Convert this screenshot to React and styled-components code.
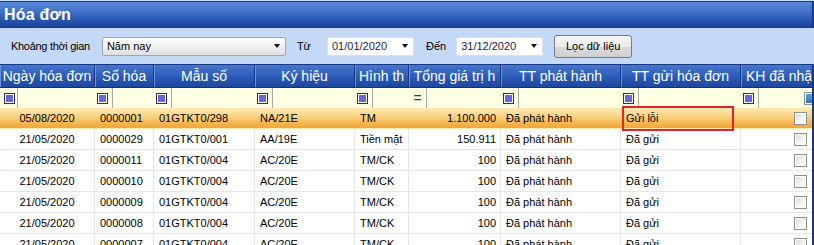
import React from "react";
import styled, { createGlobalStyle } from "styled-components";

const GlobalStyle = createGlobalStyle`
  html, body { margin: 0; padding: 0; background: #c4d9f6; }
  body { font-family: "Liberation Sans", Arial, sans-serif; font-size: 11px; color: #000; }
  * { box-sizing: border-box; }
`;

const COLS = "95px 59px 101px 100px 54px 92px 120px 120px 120px";

const Panel = styled.div`
  width: 814px;
  height: 245px;
  overflow: hidden;
  background: #c4d9f6;
`;

const TitleBar = styled.div`
  margin-top: 1px;
  height: 27px;
  border-top: 1px solid #17378a;
  border-bottom: 1px solid #173a8c;
  border-right: 2px solid #17378a;
  background: linear-gradient(#5a8ad8, #3d6cc6 45%, #2553ad 75%, #1d449c);
  display: flex;
  align-items: center;
  padding-left: 4px;
`;

const Title = styled.h1`
  margin: 0;
  font-size: 16px;
  font-weight: bold;
  color: #fff;
  letter-spacing: 0.2px;
`;

const Toolbar = styled.div`
  height: 36px;
  display: flex;
  align-items: center;
  padding-left: 11px;
`;

const Label = styled.span`
  margin-left: ${(p) => p.$ml || 0}px;
  white-space: nowrap;
  font-size: 11px;
  letter-spacing: ${(p) => p.$ls || 0}px;
`;

const Select = styled.div`
  margin-left: ${(p) => p.$ml || 0}px;
  width: ${(p) => p.$w}px;
  height: 19px;
  display: flex;
  align-items: center;
  justify-content: space-between;
  padding: 0 5px 0 4px;
  border: 1px solid ${(p) => (p.$combo ? "#9aa6b6" : "#d8e2ef")};
  border-radius: ${(p) => (p.$combo ? 2 : 0)}px;
  background: ${(p) =>
    p.$combo ? "linear-gradient(#ffffff, #f1f1f1 50%, #dedede)" : "#ffffff"};
  color: ${(p) => (p.$combo ? "#000" : "#1a1a4a")};
  font-size: 11px;
`;

const Arrow = styled.span`
  width: 0;
  height: 0;
  border-left: 3.5px solid transparent;
  border-right: 3.5px solid transparent;
  border-top: 4px solid #111;
`;

const Button = styled.button`
  margin-left: 11px;
  width: 78px;
  height: 23px;
  border: 1px solid #7a7a7a;
  border-radius: 3px;
  background: linear-gradient(#f6f6f6, #ebebeb 50%, #dadada 51%, #d0d0d0);
  font-family: "Liberation Sans", Arial, sans-serif;
  font-size: 11px;
  color: #000;
  padding: 0;
`;

const Grid = styled.div`
  position: relative;
  width: 814px;
  border-right: 2px solid #17378a;
  overflow: hidden;
  background: #fff;
`;

const Row = styled.div`
  display: grid;
  grid-template-columns: ${COLS};
  height: ${(p) => p.$h}px;
  width: 960px;
`;

const HeaderRow = styled(Row)`
  border-top: 1px solid #1a3a86;
  border-bottom: 1px solid #12337c;
  background: linear-gradient(#4675cb, #3263bf 40%, #2553ad 70%, #1f489f);
`;

const HeaderCell = styled.div`
  display: flex;
  align-items: center;
  justify-content: ${(p) => (p.$left ? "flex-start" : "center")};
  padding-left: ${(p) => (p.$left ? 5 : 0)}px;
  color: #fff;
  font-size: 14px;
  white-space: nowrap;
  overflow: hidden;
  border-right: 1px solid #18387e;
  box-shadow: inset 1px 0 0 #6a92dc;
`;

const FilterRow = styled(Row)`
  background: #fefee3;
`;

const FilterCell = styled.div`
  display: flex;
  align-items: center;
`;

const OpBox = styled.div`
  width: 18px;
  height: 20px;
  flex: none;
  display: flex;
  align-items: center;
  padding-left: ${(p) => p.$pl ?? 2}px;
  justify-content: ${(p) => (p.$center ? "center" : "flex-start")};
  border-right: 1px solid #a9a9a9;
  color: #333a66;
  font-size: 14px;
`;

const FilterIcon = styled.span`
  width: 11px;
  height: 11px;
  border: 1px solid #2c2c62;
  padding: 1px;
  background: #fff;
  display: block;
  &::after {
    content: "";
    display: block;
    width: 100%;
    height: 100%;
    background: #6767da;
  }
`;

const FilterEditor = styled.div`
  flex: 1;
  display: flex;
  justify-content: center;
  align-items: center;
`;

const DataRow = styled(Row)`
  background: ${(p) =>
    p.$selected
      ? "linear-gradient(#fde9b4, #f9d27f 45%, #f4b24b 80%, #f1a535)"
      : "#fff"};
  border-bottom: 1px solid ${(p) => (p.$selected ? "transparent" : "#e6e6e6")};
`;

const Cell = styled.div`
  display: flex;
  align-items: center;
  padding: 0 ${(p) => (p.$align === "right" ? 4 : 0)}px 0
    ${(p) => (p.$align === "left" ? 5 : 0)}px;
  justify-content: ${(p) =>
    p.$align === "right" ? "flex-end" : p.$align === "center" ? "center" : "flex-start"};
  border-right: 1px solid ${(p) => (p.$selected ? "transparent" : "#e6e6e6")};
  white-space: nowrap;
  overflow: hidden;
  font-size: 11px;
`;

const Check = styled.span`
  width: 13px;
  height: 13px;
  display: block;
  border: 1px solid #8f8f8f;
  padding: 1px;
  background: #fff;
  &::after {
    content: "";
    display: block;
    width: 100%;
    height: 100%;
    background: ${(p) =>
      p.$filled
        ? "linear-gradient(#5aa6d6, #2b78b8)"
        : "linear-gradient(135deg, #dcdcdc, #f4f4f4 60%, #ffffff)"};
  }
`;

const Highlight = styled.div`
  position: absolute;
  left: 622px;
  top: 42px;
  width: 112px;
  height: 25px;
  border: 2px solid #e4222a;
  pointer-events: none;
`;

const headers = [
  "Ngày hóa đơn",
  "Số hóa",
  "Mẫu số",
  "Ký hiệu",
  "Hình th",
  "Tổng giá trị h",
  "TT phát hành",
  "TT gửi hóa đơn",
  "KH đã nhận",
];

const aligns = ["center", "left", "left", "left", "left", "right", "left", "left", "center"];

const rows = [
  ["05/08/2020", "0000001", "01GTKT0/298", "NA/21E", "TM", "1.100.000", "Đã phát hành", "Gửi lỗi"],
  ["21/05/2020", "0000029", "01GTKT0/001", "AA/19E", "Tiền mặt", "150.911", "Đã phát hành", "Đã gửi"],
  ["21/05/2020", "0000011", "01GTKT0/004", "AC/20E", "TM/CK", "100", "Đã phát hành", "Đã gửi"],
  ["21/05/2020", "0000010", "01GTKT0/004", "AC/20E", "TM/CK", "100", "Đã phát hành", "Đã gửi"],
  ["21/05/2020", "0000009", "01GTKT0/004", "AC/20E", "TM/CK", "100", "Đã phát hành", "Đã gửi"],
  ["21/05/2020", "0000008", "01GTKT0/004", "AC/20E", "TM/CK", "100", "Đã phát hành", "Đã gửi"],
  ["21/05/2020", "0000007", "01GTKT0/004", "AC/20E", "TM/CK", "100", "Đã phát hành", "Đã gửi"],
];

export default function App() {
  return (
    <>
      <GlobalStyle />
      <Panel>
        <TitleBar>
          <Title>Hóa đơn</Title>
        </TitleBar>
        <Toolbar>
          <Label $ls={-0.3}>Khoảng thời gian</Label>
          <Select $combo $ml={12} $w={184}>
            <span>Năm nay</span>
            <Arrow />
          </Select>
          <Label $ml={11}>Từ</Label>
          <Select $ml={16} $w={87}>
            <span>01/01/2020</span>
            <Arrow />
          </Select>
          <Label $ml={12}>Đến</Label>
          <Select $ml={10} $w={87}>
            <span>31/12/2020</span>
            <Arrow />
          </Select>
          <Button>Lọc dữ liệu</Button>
        </Toolbar>
        <Grid>
          <HeaderRow $h={24}>
            {headers.map((h, i) => (
              <HeaderCell key={h} $left={i === 8}>
                {h}
              </HeaderCell>
            ))}
          </HeaderRow>
          <FilterRow $h={20}>
            {headers.map((h, i) => (
              <FilterCell key={h}>
                {i === 5 ? (
                  <OpBox $center $pl={0}>=</OpBox>
                ) : (
                  <OpBox $pl={i === 0 ? 4 : 2}>
                    <FilterIcon />
                  </OpBox>
                )}
                <FilterEditor>{i === 8 && <Check $filled />}</FilterEditor>
              </FilterCell>
            ))}
          </FilterRow>
          {rows.map((r, ri) => (
            <DataRow key={ri} $h={21} $selected={ri === 0}>
              {r.map((v, ci) => (
                <Cell key={ci} $align={aligns[ci]} $selected={ri === 0}>
                  {v}
                </Cell>
              ))}
              <Cell $align="center" $selected={ri === 0}>
                <Check />
              </Cell>
            </DataRow>
          ))}
          <Highlight />
        </Grid>
      </Panel>
    </>
  );
}
